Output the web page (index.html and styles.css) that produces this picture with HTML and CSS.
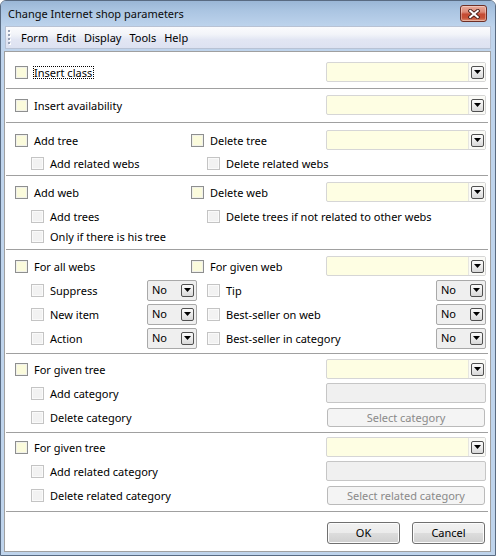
FILE: index.html
```html
<!DOCTYPE html>
<html>
<head>
<meta charset="utf-8">
<title>Change Internet shop parameters</title>
<link rel="stylesheet" href="styles.css">
</head>
<body>
<div class="window">
  <div class="titlebar">
    <span class="title">Change Internet shop parameters</span>
    <span class="close">
      <svg width="12" height="10" viewBox="0 0 12 10">
        <path d="M2.2 1.8 L9.8 8.2 M9.8 1.8 L2.2 8.2" stroke="#4a211a" stroke-width="3.8" stroke-linecap="square" fill="none"/>
        <path d="M2.2 1.8 L9.8 8.2 M9.8 1.8 L2.2 8.2" stroke="#ffffff" stroke-width="2" stroke-linecap="square" fill="none"/>
      </svg>
    </span>
  </div>
  <div class="menubar">
    <span class="grip"></span>
    <span class="menu">Form</span>
    <span class="menu">Edit</span>
    <span class="menu">Display</span>
    <span class="menu">Tools</span>
    <span class="menu">Help</span>
  </div>
  <div class="panel">
    <div class="sec s1">
      <div class="row">
        <div class="cell"><span class="cb"></span><span class="lbl focus">Insert class</span></div>
        <div class="cell"></div>
        <div class="combo"><span class="field"></span><span class="dd"><span class="btn"><svg width="7" height="4" viewBox="0 0 7 4"><path d="M0 0H7L3.5 4Z" fill="#000"/></svg></span></span></div>
      </div>
    </div>
    <div class="sec s2">
      <div class="row">
        <div class="cell"><span class="cb"></span><span class="lbl">Insert availability</span></div>
        <div class="cell"></div>
        <div class="combo"><span class="field"></span><span class="dd"><span class="btn"><svg width="7" height="4" viewBox="0 0 7 4"><path d="M0 0H7L3.5 4Z" fill="#000"/></svg></span></span></div>
      </div>
    </div>
    <div class="sec s3">
      <div class="row">
        <div class="cell"><span class="cb"></span><span class="lbl">Add tree</span></div>
        <div class="cell"><span class="cb"></span><span class="lbl">Delete tree</span></div>
        <div class="combo"><span class="field"></span><span class="dd"><span class="btn"><svg width="7" height="4" viewBox="0 0 7 4"><path d="M0 0H7L3.5 4Z" fill="#000"/></svg></span></span></div>
      </div>
      <div class="row h22">
        <div class="cell sub"><span class="cb dis"></span><span class="lbl">Add related webs</span></div>
        <div class="cell sub"><span class="cb dis"></span><span class="lbl">Delete related webs</span></div>
        <div class="cell"></div>
      </div>
    </div>
    <div class="sec s4">
      <div class="row">
        <div class="cell"><span class="cb"></span><span class="lbl">Add web</span></div>
        <div class="cell"><span class="cb"></span><span class="lbl">Delete web</span></div>
        <div class="combo"><span class="field"></span><span class="dd"><span class="btn"><svg width="7" height="4" viewBox="0 0 7 4"><path d="M0 0H7L3.5 4Z" fill="#000"/></svg></span></span></div>
      </div>
      <div class="row">
        <div class="cell sub"><span class="cb dis"></span><span class="lbl">Add trees</span></div>
        <div class="cell sub"><span class="cb dis"></span><span class="lbl">Delete trees if not related to other webs</span></div>
        <div class="cell"></div>
      </div>
      <div class="row h17">
        <div class="cell sub"><span class="cb dis"></span><span class="lbl">Only if there is his tree</span></div>
        <div class="cell"></div>
        <div class="cell"></div>
      </div>
    </div>
    <div class="sec s5">
      <div class="row">
        <div class="cell"><span class="cb"></span><span class="lbl">For all webs</span></div>
        <div class="cell"><span class="cb"></span><span class="lbl">For given web</span></div>
        <div class="combo"><span class="field"></span><span class="dd"><span class="btn"><svg width="7" height="4" viewBox="0 0 7 4"><path d="M0 0H7L3.5 4Z" fill="#000"/></svg></span></span></div>
      </div>
      <div class="row flags">
        <div class="cell sub"><span class="cb dis"></span><span class="lbl">Suppress</span></div>
        <div class="nosel"><span class="val">No</span><span class="dd"><span class="btn"><svg width="7" height="4" viewBox="0 0 7 4"><path d="M0 0H7L3.5 4Z" fill="#000"/></svg></span></span></div>
        <div class="cell sub2"><span class="cb dis"></span><span class="lbl">Tip</span></div>
        <div class="nosel"><span class="val">No</span><span class="dd"><span class="btn"><svg width="7" height="4" viewBox="0 0 7 4"><path d="M0 0H7L3.5 4Z" fill="#000"/></svg></span></span></div>
      </div>
      <div class="row flags">
        <div class="cell sub"><span class="cb dis"></span><span class="lbl">New item</span></div>
        <div class="nosel"><span class="val">No</span><span class="dd"><span class="btn"><svg width="7" height="4" viewBox="0 0 7 4"><path d="M0 0H7L3.5 4Z" fill="#000"/></svg></span></span></div>
        <div class="cell sub2"><span class="cb dis"></span><span class="lbl">Best-seller on web</span></div>
        <div class="nosel"><span class="val">No</span><span class="dd"><span class="btn"><svg width="7" height="4" viewBox="0 0 7 4"><path d="M0 0H7L3.5 4Z" fill="#000"/></svg></span></span></div>
      </div>
      <div class="row flags">
        <div class="cell sub"><span class="cb dis"></span><span class="lbl">Action</span></div>
        <div class="nosel"><span class="val">No</span><span class="dd"><span class="btn"><svg width="7" height="4" viewBox="0 0 7 4"><path d="M0 0H7L3.5 4Z" fill="#000"/></svg></span></span></div>
        <div class="cell sub2"><span class="cb dis"></span><span class="lbl">Best-seller in category</span></div>
        <div class="nosel"><span class="val">No</span><span class="dd"><span class="btn"><svg width="7" height="4" viewBox="0 0 7 4"><path d="M0 0H7L3.5 4Z" fill="#000"/></svg></span></span></div>
      </div>
    </div>
    <div class="sec s6">
      <div class="row">
        <div class="cell"><span class="cb"></span><span class="lbl">For given tree</span></div>
        <div class="cell"></div>
        <div class="combo"><span class="field"></span><span class="dd"><span class="btn"><svg width="7" height="4" viewBox="0 0 7 4"><path d="M0 0H7L3.5 4Z" fill="#000"/></svg></span></span></div>
      </div>
      <div class="row">
        <div class="cell sub"><span class="cb dis"></span><span class="lbl">Add category</span></div>
        <div class="cell"></div>
        <div class="dinput"></div>
      </div>
      <div class="row">
        <div class="cell sub"><span class="cb dis"></span><span class="lbl">Delete category</span></div>
        <div class="cell"></div>
        <div class="sbtn">Select category</div>
      </div>
    </div>
    <div class="sec s7">
      <div class="row">
        <div class="cell"><span class="cb"></span><span class="lbl">For given tree</span></div>
        <div class="cell"></div>
        <div class="combo"><span class="field"></span><span class="dd"><span class="btn"><svg width="7" height="4" viewBox="0 0 7 4"><path d="M0 0H7L3.5 4Z" fill="#000"/></svg></span></span></div>
      </div>
      <div class="row">
        <div class="cell sub"><span class="cb dis"></span><span class="lbl">Add related category</span></div>
        <div class="cell"></div>
        <div class="dinput"></div>
      </div>
      <div class="row">
        <div class="cell sub"><span class="cb dis"></span><span class="lbl">Delete related category</span></div>
        <div class="cell"></div>
        <div class="sbtn">Select related category</div>
      </div>
    </div>
    <div class="footer">
      <div class="pbtn">OK</div>
      <div class="pbtn">Cancel</div>
    </div>
  </div>
</div>
</body>
</html>
```
FILE: styles.css
```css
* { box-sizing: border-box; }
html, body { margin: 0; padding: 0; }
body {
  width: 496px;
  height: 556px;
  overflow: hidden;
  background: #ffffff;
  font-family: "Noto Sans", "Open Sans", sans-serif;
  font-size: 11px;
  color: #000;
}
.window {
  width: 496px;
  height: 556px;
  border: 1px solid #596b82;
  border-radius: 6px 6px 0 0;
  background: #bfd4ec;
  display: flex;
  flex-direction: column;
}
.titlebar {
  flex: none;
  height: 25px;
  display: flex;
  justify-content: space-between;
  align-items: flex-start;
  padding: 0 8px 0 7px;
  border-radius: 5px 5px 0 0;
  background: linear-gradient(#9ab6d6 0%, #abc5e2 40%, #bdd3ec 100%);
}
.title {
  line-height: 25px;
  color: #0b0b0b;
  white-space: nowrap;
}
.close {
  margin-top: 4px;
  width: 27px;
  height: 17px;
  border: 1px solid #6e2f26;
  border-radius: 3px;
  background: linear-gradient(#e9aa9a 0%, #dc8a77 40%, #c44a32 55%, #c65237 80%, #e09276 100%);
  box-shadow: inset 0 0 0 1px rgba(255,255,255,0.35);
  display: flex;
  align-items: center;
  justify-content: center;
}
.close svg { display: block; }
.menubar {
  flex: none;
  height: 23px;
  margin: 0 4px 0 4px;
  border: 1px solid #b8c2d4;
  background: linear-gradient(#fbfbfd 0%, #f2f4f9 35%, #e2e6f3 60%, #dde2f1 100%);
  display: flex;
  align-items: center;
}
.grip {
  width: 3px;
  height: 16px;
  margin-left: 2px;
  margin-right: 6px;
  background:
    repeating-linear-gradient(to bottom, #97a1b5 0 2px, transparent 2px 4px) 0 0 / 2px 100% no-repeat,
    repeating-linear-gradient(to bottom, #ffffff 0 2px, transparent 2px 4px) 1px 1px / 2px 100% no-repeat;
}
.menu {
  padding: 0 4px;
  line-height: 18px;
  white-space: nowrap;
}
.panel {
  flex: 1;
  margin: 2px 4px 3px 3px;
  border: 1px solid #a0a0a0;
  background: #ffffff;
  display: flex;
  flex-direction: column;
}
.sec {
  flex: none;
  margin: 0 2px 0 1px;
  padding-left: 9px;
  border-bottom: 1px solid #a0a0a0;
}
.s1 { padding-top: 8px; padding-bottom: 4px; }
.s2 { padding-top: 4px; padding-bottom: 5px; }
.s3 { padding-top: 5px; padding-bottom: 1px; }
.s4 { padding-top: 4px; padding-bottom: 4px; }
.s5 { padding-top: 4px; padding-bottom: 3px; }
.s6 { padding-top: 3px; padding-bottom: 3px; }
.s7 { padding-top: 2px; padding-bottom: 4px; }
.row {
  display: grid;
  grid-template-columns: 176px 135px 160px;
  align-items: center;
  height: 24px;
}
.row.h22 { height: 22px; }
.row.h17 { height: 17px; }
.row.flags { grid-template-columns: 132px 50px 239px 50px; }
.cell {
  display: flex;
  align-items: center;
  min-width: 0;
}
.cell.sub { padding-left: 16px; }
.cell.sub2 { padding-left: 10px; }
.cb {
  flex: none;
  width: 13px;
  height: 13px;
  border: 1px solid #8e8f8f;
  background: #fbfbdc;
  box-shadow: inset 0 0 0 1px #f1f1ea;
}
.cb.dis {
  border-color: #c4c4c4;
  background: #f2f2f2;
  box-shadow: inset 0 0 0 1px #fafafa;
}
.lbl {
  display: inline-block;
  margin-left: 5px;
  padding: 0 1px;
  line-height: 13px;
  white-space: nowrap;
}
.focus {
  outline: 1px dotted #000;
  outline-offset: -1px;
  padding-right: 2px;
}
.combo {
  height: 20px;
  display: flex;
  border: 1px solid #d6d6d6;
  border-radius: 2px;
  background: #fefee3;
}
.combo .field { flex: 1; }
.dd {
  flex: none;
  width: 17px;
  display: flex;
  align-items: center;
  justify-content: center;
  border-left: 1px solid #e6e6e0;
  background: #fafaf6;
}
.btn {
  width: 13px;
  height: 13px;
  border: 1px solid #505050;
  border-radius: 2px;
  background: linear-gradient(#fbfbfb 0%, #ebebeb 50%, #d8d8d8 100%);
  display: flex;
  align-items: center;
  justify-content: center;
}
.btn svg { display: block; }
.nosel {
  height: 21px;
  display: flex;
  border: 1px solid #a9a9a9;
  border-radius: 2px;
  background: #efefef;
}
.nosel .val {
  flex: 1;
  padding-left: 4px;
  line-height: 18px;
}
.nosel .dd {
  width: 18px;
  border-left: none;
  background: transparent;
}
.dinput {
  height: 20px;
  border: 1px solid #c6c6c6;
  border-radius: 2px;
  background: #f0f0f0;
}
.sbtn {
  height: 19px;
  margin: 0 1px;
  border: 1px solid #bababa;
  border-radius: 3px;
  background: #f4f4f4;
  color: #8a8a8a;
  text-align: center;
  line-height: 17px;
  white-space: nowrap;
}
.footer {
  flex: 1;
  display: flex;
  justify-content: flex-end;
  align-items: flex-start;
  gap: 12px;
  padding: 10px 5px 0 0;
}
.pbtn {
  width: 73px;
  height: 22px;
  border: 1px solid #707070;
  border-radius: 3px;
  background: linear-gradient(#f2f2f2 0%, #ebebeb 49%, #dddddd 50%, #cfcfcf 100%);
  box-shadow: inset 0 0 0 1px #fcfcfc;
  text-align: center;
  line-height: 20px;
}
```
